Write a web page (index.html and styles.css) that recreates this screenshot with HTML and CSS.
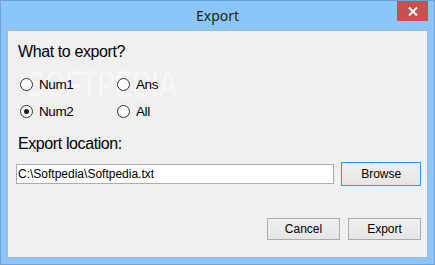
FILE: index.html
```html
<!DOCTYPE html>
<html lang="en">
<head>
    <meta charset="UTF-8" />
    <title>Export</title>
    <link rel="stylesheet" href="styles.css">
</head>
<body>
<div class="window">
    <div class="titlebar">
        <span class="title">Export</span>
        <button class="close" aria-label="Close">
            <svg width="10" height="9" viewBox="0 0 10 9">
                <path d="M1 0.5 L9 8.5 M9 0.5 L1 8.5" stroke="#fff" stroke-width="2" fill="none" />
            </svg>
        </button>
    </div>
    <div class="client">
        <div class="watermark">SOFTPEDIA<sup>®</sup></div>
        <div class="heading first">What to export?</div>
        <div class="choices">
            <label class="choice"><input type="radio" name="what" /> Num1</label>
            <label class="choice"><input type="radio" name="what" /> Ans</label>
            <label class="choice"><input type="radio" name="what" checked /> Num2</label>
            <label class="choice"><input type="radio" name="what" /> All</label>
        </div>
        <div class="heading">Export location:</div>
        <div class="location">
            <input class="path" type="text" value="C:\Softpedia\Softpedia.txt" />
            <button class="btn default">Browse</button>
        </div>
        <div class="actions">
            <button class="btn">Cancel</button>
            <button class="btn">Export</button>
        </div>
    </div>
</div>
</body>
</html>
```

FILE: styles.css
```css
* {
    margin: 0;
    padding: 0;
    box-sizing: border-box;
}
html, body {
    background: #8cc6f8;
    font-family: "Liberation Sans", Arial, sans-serif;
    color: #000;
}
.window {
    width: 435px;
    height: 265px;
    background: #8cc6f8;
    border: 1px solid #6fa3d8;
    padding: 0 6px 6px 6px;
    display: flex;
    flex-direction: column;
    position: relative;
}
.titlebar {
    height: 29px;
    display: flex;
    align-items: center;
    justify-content: center;
}
.title {
    font-family: "Noto Sans", sans-serif;
    font-size: 14px;
    color: #222;
    margin-top: -1px;
}
.close {
    position: absolute;
    top: 0;
    right: 6px;
    width: 31px;
    height: 20px;
    border: none;
    background: #c75050;
    display: flex;
    align-items: center;
    justify-content: center;
}
.client {
    flex: 1;
    background: #f0f0f0;
    border: 1px solid #9fbcd9;
    padding: 0 6px 0 8px;
    display: flex;
    flex-direction: column;
    position: relative;
}
.watermark {
    position: absolute;
    top: 33px;
    left: 19px;
    font-size: 37px;
    font-weight: bold;
    letter-spacing: -1px;
    color: #f6f6f6;
    text-shadow: 0 0 1px #e6e6e6;
    transform: scaleX(0.74);
    transform-origin: left top;
    pointer-events: none;
}
.watermark sup {
    font-size: 10px;
    font-weight: normal;
    vertical-align: top;
}
.heading {
    font-size: 16px;
    line-height: 18px;
    letter-spacing: -0.4px;
    margin-left: 2px;
    margin-top: 10px;
    position: relative;
}
.heading.first {
    margin-top: 12px;
}
.choices {
    display: grid;
    grid-template-columns: 97px 97px;
    grid-auto-rows: 27px;
    margin-left: 4px;
    margin-top: 10px;
    position: relative;
}
.choice {
    display: flex;
    align-items: center;
    gap: 6px;
    font-size: 13.5px;
    letter-spacing: -0.4px;
}
.choice input {
    appearance: none;
    width: 13px;
    height: 13px;
    border: 1px solid #333;
    border-radius: 50%;
    background: #fff;
    display: flex;
    align-items: center;
    justify-content: center;
}
.choice input:checked::after {
    content: "";
    width: 5px;
    height: 5px;
    border-radius: 50%;
    background: #1a1a1a;
}
.location {
    display: flex;
    align-items: center;
    gap: 7px;
    margin-top: 9px;
    height: 24px;
}
.path {
    width: 320px;
    height: 20px;
    border: 1px solid #abadb3;
    background: #fff;
    font-family: "Liberation Sans", Arial, sans-serif;
    font-size: 12px;
    padding: 0 1px;
    color: #000;
    outline: none;
}
.btn {
    width: 73px;
    height: 22px;
    border: 1px solid #acacac;
    background: linear-gradient(#f0f0f0, #e5e5e5);
    font-family: "Liberation Sans", Arial, sans-serif;
    font-size: 12px;
    color: #000;
}
.btn.default {
    width: 80px;
    height: 24px;
    border-color: #3399ff;
}
.actions {
    display: flex;
    justify-content: flex-end;
    gap: 8px;
    margin-top: 32px;
}
```
